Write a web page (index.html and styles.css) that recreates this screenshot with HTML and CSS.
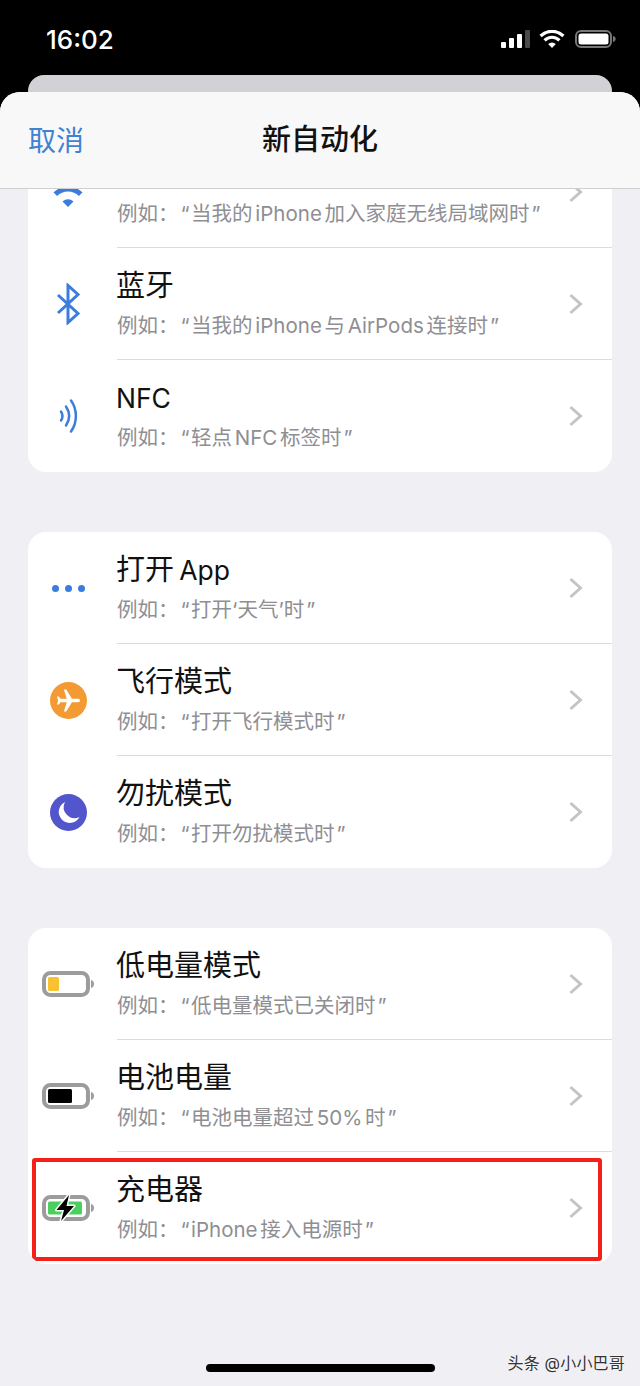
FILE: index.html
```html
<!DOCTYPE html>
<html lang="zh-CN">
<head>
<meta charset="utf-8">
<title>新自动化</title>
<link rel="stylesheet" href="styles.css">
</head>
<body>
<div class="phone">
  <header class="status">
    <span class="time">16:02</span>
    <div class="status-icons">
      <div class="signal"><i class="b1"></i><i class="b2"></i><i class="b3"></i><i class="b4"></i></div>
      <svg class="st-wifi" width="26" height="18" viewBox="0 0 26 18"><path class="fill-white" d="M13 18 9.200 14.100a5.400 5.400 0 0 1 7.600 0z"/><path class="st-white" d="M5.600 10.300a10.500 10.500 0 0 1 14.800 0M1.600 6a16.200 16.200 0 0 1 22.800 0"/></svg>
      <svg class="st-batt" width="41" height="18" viewBox="0 0 41 18"><rect x="1" y="1" width="35" height="16" rx="5" class="st-batt-frame"/><rect x="3.500" y="3.500" width="30" height="11" rx="2.500" class="fill-white"/><path class="st-batt-nub" d="M38 6c2 .4 2.600 1.600 2.600 3s-.6 2.600-2.600 3z"/></svg>
    </div>
  </header>
  <div class="backcard"></div>
  <main class="sheet">
    <nav class="nav">
      <span class="nav-cancel">取消</span>
      <span class="nav-title">新自动化</span>
    </nav>
    <div class="list">
      <section class="card card-first">
        <div class="row">
          <div class="icon"><svg width="40" height="40" viewBox="0 0 40 40"><path class="fill-blue" d="M20 35 14.500 29.500a8 8 0 0 1 11 0z"/><path class="st-blue st-thick" d="M7.300 22.300a18 18 0 0 1 25.400 0M.2 15.200a28 28 0 0 1 39.600 0"/></svg></div>
          <div class="body">
            <div class="sub sub-only">例如：<span class="q">“</span>当我的 iPhone 加入家庭无线局域网时<span class="qe">”</span></div>
            <svg class="chev" width="16" height="24" viewBox="0 0 16 24"><path d="M2.500 3 12.500 12 2.500 21"/></svg>
          </div>
        </div>
        <div class="row">
          <div class="icon"><svg width="26" height="42" viewBox="0 0 26 42"><path class="st-blue" d="M3 12 23 30.500 13 39.500V2.500L23 11.500 3 30"/></svg></div>
          <div class="body">
            <div class="title">蓝牙</div>
            <div class="sub">例如：<span class="q">“</span>当我的 iPhone 与 AirPods 连接时<span class="qe">”</span></div>
            <svg class="chev" width="16" height="24" viewBox="0 0 16 24"><path d="M2.500 3 12.500 12 2.500 21"/></svg>
          </div>
        </div>
        <div class="row">
          <div class="icon"><svg width="20" height="36" viewBox="0 0 20 36"><path class="st-blue st-thin" d="M3 13.500c2 3 2 6 0 9M8 8.500c4 6 4 13 0 19M13 2.500c6.500 9 6.500 22 0 31"/></svg></div>
          <div class="body">
            <div class="title"><span class="lat">NFC</span></div>
            <div class="sub">例如：<span class="q">“</span>轻点 NFC 标签时<span class="qe">”</span></div>
            <svg class="chev" width="16" height="24" viewBox="0 0 16 24"><path d="M2.500 3 12.500 12 2.500 21"/></svg>
          </div>
        </div>
      </section>

      <section class="card">
        <div class="row">
          <div class="icon"><div class="dots"><i></i><i></i><i></i></div></div>
          <div class="body">
            <div class="title">打开 <span class="lat">App</span></div>
            <div class="sub">例如：<span class="q">“</span>打开‘天气’时<span class="qe">”</span></div>
            <svg class="chev" width="16" height="24" viewBox="0 0 16 24"><path d="M2.500 3 12.500 12 2.500 21"/></svg>
          </div>
        </div>
        <div class="row">
          <div class="icon"><svg width="37" height="37" viewBox="0 0 37 37"><circle cx="18.500" cy="18.500" r="18.500" class="fill-orange"/><g transform="translate(18.500 18.500) rotate(90) scale(1.150) translate(-11.500 -12)"><path class="fill-white" d="M21 16v-2l-8-5V3.500c0-.83-.67-1.500-1.500-1.500S10 2.670 10 3.500V9l-8 5v2l8-2.500V19l-2 1.500V22l3.500-1 3.500 1v-1.500L13 19v-5.500l8 2.500z"/></g></svg></div>
          <div class="body">
            <div class="title">飞行模式</div>
            <div class="sub">例如：<span class="q">“</span>打开飞行模式时<span class="qe">”</span></div>
            <svg class="chev" width="16" height="24" viewBox="0 0 16 24"><path d="M2.500 3 12.500 12 2.500 21"/></svg>
          </div>
        </div>
        <div class="row">
          <div class="icon"><svg width="37" height="37" viewBox="0 0 37 37"><circle cx="18.500" cy="18.500" r="18.500" class="fill-indigo"/><path class="fill-white" d="M15 8A11 11 0 1 0 29.500 23 11 11 0 0 1 15 8z"/></svg></div>
          <div class="body">
            <div class="title">勿扰模式</div>
            <div class="sub">例如：<span class="q">“</span>打开勿扰模式时<span class="qe">”</span></div>
            <svg class="chev" width="16" height="24" viewBox="0 0 16 24"><path d="M2.500 3 12.500 12 2.500 21"/></svg>
          </div>
        </div>
      </section>

      <section class="card">
        <div class="row">
          <div class="icon"><svg width="54" height="28" viewBox="0 0 54 28"><rect x="3" y="3" width="44" height="22" rx="6.500" class="batt-frame"/><rect x="7" y="7" width="11" height="14" rx="1.500" class="fill-yellow"/><path class="batt-nub" d="M50 10c2 .5 3 2 3 4s-1 3.500-3 4z"/></svg></div>
          <div class="body">
            <div class="title">低电量模式</div>
            <div class="sub">例如：<span class="q">“</span>低电量模式已关闭时<span class="qe">”</span></div>
            <svg class="chev" width="16" height="24" viewBox="0 0 16 24"><path d="M2.500 3 12.500 12 2.500 21"/></svg>
          </div>
        </div>
        <div class="row">
          <div class="icon"><svg width="54" height="28" viewBox="0 0 54 28"><rect x="3" y="3" width="44" height="22" rx="6.500" class="batt-frame"/><rect x="7" y="7" width="24" height="14" rx="1.500" class="fill-black"/><path class="batt-nub" d="M50 10c2 .5 3 2 3 4s-1 3.500-3 4z"/></svg></div>
          <div class="body">
            <div class="title">电池电量</div>
            <div class="sub">例如：<span class="q">“</span>电池电量超过 50% 时<span class="qe">”</span></div>
            <svg class="chev" width="16" height="24" viewBox="0 0 16 24"><path d="M2.500 3 12.500 12 2.500 21"/></svg>
          </div>
        </div>
        <div class="row">
          <div class="icon"><svg width="54" height="28" viewBox="0 0 54 28"><rect x="3" y="3" width="44" height="22" rx="6.500" class="batt-frame"/><rect x="7" y="7.500" width="34" height="13" rx="1.500" class="fill-green"/><path class="bolt" d="M28 1 15.500 16H23L20 27 33 12H25.500z"/><path class="batt-nub" d="M50 10c2 .5 3 2 3 4s-1 3.500-3 4z"/></svg></div>
          <div class="body">
            <div class="title">充电器</div>
            <div class="sub">例如：<span class="q">“</span>iPhone 接入电源时<span class="qe">”</span></div>
            <svg class="chev" width="16" height="24" viewBox="0 0 16 24"><path d="M2.500 3 12.500 12 2.500 21"/></svg>
          </div>
          <div class="redbox"></div>
        </div>
      </section>
    </div>
    <div class="home-bar"></div>
    <div class="watermark">头条 @小小巴哥</div>
  </main>
</div>
</body>
</html>
```
FILE: styles.css
```css
* { box-sizing: border-box; }
html, body { margin: 0; padding: 0; background: #000; }
body { font-family: Inter, "Noto Sans CJK SC", sans-serif; }
.phone { width: 640px; height: 1386px; overflow: hidden; display: flex; flex-direction: column; background: #000; }

.status { height: 75px; flex: none; display: flex; justify-content: space-between; align-items: flex-start; padding: 24px 24px 0 46px; color: #fff; }
.time { font-size: 26px; font-weight: 500; line-height: 31px; }
.status-icons { display: flex; align-items: flex-end; padding-top: 6px; }
.signal { display: flex; align-items: flex-end; gap: 3px; height: 18px; margin-right: 9px; }
.signal i { display: block; width: 5px; background: #fff; border-radius: 1px; }
.signal .b1 { height: 6px; }
.signal .b2 { height: 10px; }
.signal .b3 { height: 14px; }
.signal .b4 { height: 18px; background: #4a4a4a; }
.st-wifi { margin-right: 10px; }
.st-white { fill: none; stroke: #fff; stroke-width: 3.200; }
.st-batt-frame { fill: none; stroke: #777; stroke-width: 2; }
.st-batt-nub { fill: #777; }

.backcard { height: 40px; flex: none; margin: 0 28px -23px; background: #d1d1d6; border-radius: 16px 16px 0 0; }

.sheet { flex: 1; min-height: 0; position: relative; display: flex; flex-direction: column; background: #efeff4; border-radius: 20px 20px 0 0; overflow: hidden; }
.nav { height: 97px; flex: none; position: relative; display: flex; align-items: center; justify-content: center; background: #f8f8f9; border-bottom: 1px solid #cfcfd2; }
.nav-cancel { position: absolute; left: 28px; top: 31px; font-size: 28px; line-height: 36px; color: #3f82d2; }
.nav-title { font-size: 29px; line-height: 36px; font-weight: 500; color: #111; }

.list { flex: 1; min-height: 0; overflow: hidden; padding: 0 28px; display: flex; flex-direction: column; gap: 60px; }
.card { flex: none; background: #fff; border-radius: 18px; overflow: hidden; }
.card-first { margin-top: -53px; }
.row { position: relative; display: flex; height: 112px; }
.icon { width: 80px; margin-right: 9px; flex: none; display: flex; align-items: center; justify-content: center; }
.icon svg { display: block; flex: none; }
.body { flex: 1; position: relative; padding-top: 20px; border-bottom: 1px solid #dcdce0; }
.row:last-child .body { border-bottom: 0; }
.title { font-size: 29px; line-height: 36px; color: #111; word-spacing: -3px; margin-left: -1px; }
.lat { font-size: 26.500px; }
.sub { margin-top: 8px; font-size: 20.500px; line-height: 28px; color: #8e8e93; word-spacing: -3px; }
.sub-only { margin-top: 44px; }
.q { margin: 0 1.500px 0 2px; }
.qe { margin-left: 2px; }
.chev { position: absolute; right: 28px; top: 44px; }
.chev path { fill: none; stroke: #c4c4c6; stroke-width: 3; }

.dots { display: flex; gap: 6px; }
.dots i { display: block; width: 7px; height: 7px; border-radius: 50%; background: #3b7ddd; }

.fill-white { fill: #fff; }
.fill-blue { fill: #3b7ddd; }
.fill-orange { fill: #f39a33; }
.fill-indigo { fill: #5355cc; }
.fill-yellow { fill: #f7c130; }
.fill-black { fill: #000; }
.fill-green { fill: #4bcf5f; }
.st-blue { fill: none; stroke: #3b7ddd; stroke-width: 3; }
.st-thin { stroke-width: 2.500; stroke-linecap: round; }
.st-thick { stroke-width: 5; }
.batt-frame { fill: none; stroke: #9c9c9c; stroke-width: 4; }
.batt-nub { fill: #9c9c9c; }
.bolt { fill: #000; stroke: #fff; stroke-width: 3; paint-order: stroke; stroke-linejoin: round; }

.redbox { position: absolute; left: 4px; right: 10px; top: 6px; bottom: 3px; border: 4px solid #f5201a; border-radius: 3px; }

.home-bar { position: absolute; left: 206px; bottom: 14px; width: 229px; height: 8px; border-radius: 4px; background: #000; }
.watermark { position: absolute; right: 15px; bottom: 12px; font-size: 16px; line-height: 22px; letter-spacing: .2px; color: #333; text-shadow: 0 0 2px #fff; }
```
